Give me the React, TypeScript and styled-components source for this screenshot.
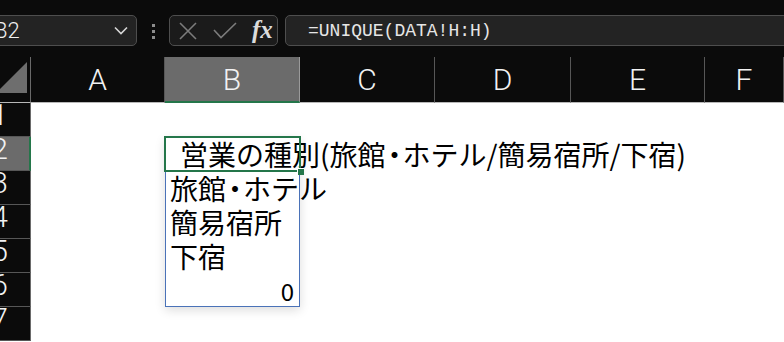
import React from "react";
import styled, { createGlobalStyle } from "styled-components";

const Global = createGlobalStyle`
  html, body { margin: 0; padding: 0; background: #0b0b0b; }
  body { width: 784px; height: 342px; overflow: hidden; }
`;

const Frame = styled.div`
  width: 784px;
  height: 342px;
  overflow: hidden;
  display: flex;
  flex-direction: column;
  background: #0b0b0b;
`;

const Toolbar = styled.div`
  height: 57px;
  box-sizing: border-box;
  padding-top: 15px;
  display: flex;
  align-items: flex-start;
  flex-shrink: 0;
`;

const NameBox = styled.div`
  margin-left: -12px;
  width: 149px;
  height: 31px;
  box-sizing: border-box;
  border: 1px solid #4e4e4e;
  border-radius: 5px;
  background: #232323;
  display: flex;
  align-items: center;
  justify-content: space-between;
  padding: 0 8px 0 5px;
  color: #f0f0f0;
  font: 300 22px Roboto, "Liberation Sans", sans-serif;
`;

const Dots = styled.div`
  margin-left: 14px;
  height: 31px;
  display: flex;
  align-items: center;
`;

const FxBox = styled.div`
  margin-left: 13px;
  width: 109px;
  height: 31px;
  box-sizing: border-box;
  border: 1px solid #4e4e4e;
  border-radius: 5px;
  background: #1b1b1b;
  display: flex;
  align-items: center;
  padding-left: 8px;
  gap: 15px;
`;

const FxLabel = styled.span`
  margin-left: 0;
  color: #dcdcdc;
  font: italic bold 25px "Liberation Serif", serif;
  line-height: 1;
  margin-top: -2px;
`;

const FormulaBar = styled.div`
  margin-left: 7px;
  margin-right: -10px;
  flex: 1;
  height: 31px;
  box-sizing: border-box;
  border: 1px solid #4e4e4e;
  border-radius: 5px;
  background: #232323;
  display: flex;
  align-items: center;
  padding-left: 22px;
  color: #e6e6e6;
  font: 18px "Liberation Mono", monospace;
`;

const Sheet = styled.div`
  display: grid;
  grid-template-columns: 31px 134px 135px 135px 136px 134px 1fr;
  grid-template-rows: 46px repeat(7, 34px);
  background: #ffffff;
  flex: 1;
`;

const Corner = styled.div`
  background: #0b0b0b;
  border-right: 1px solid #6a6a6a;
  border-bottom: 1px solid #b8b8b8;
  box-sizing: border-box;
  display: flex;
  align-items: flex-start;
`;

const ColHeader = styled.div<{ $selected?: boolean }>`
  box-sizing: border-box;
  background: ${(p) => (p.$selected ? "#6b6b6b" : "#0b0b0b")};
  border-right: 1px solid ${(p) => (p.$selected ? "#9a9a9a" : "#575757")};
  border-bottom: ${(p) => (p.$selected ? "2px solid #24764a" : "1px solid #b8b8b8")};
  display: flex;
  align-items: center;
  justify-content: center;
  color: #f2f2f2;
  font: 300 30px Roboto, "Liberation Sans", sans-serif;
  padding-top: ${(p) => (p.$selected ? "1px" : "0")};
`;

const RowHeader = styled.div<{ $selected?: boolean }>`
  grid-column: 1;
  box-sizing: border-box;
  background: ${(p) => (p.$selected ? "#6b6b6b" : "#0b0b0b")};
  border-bottom: 1px solid #575757;
  border-right: ${(p) => (p.$selected ? "2px solid #24764a" : "1px solid #6a6a6a")};
  overflow: hidden;
  display: flex;
  justify-content: flex-end;
  align-items: flex-start;
  padding-right: ${(p) => (p.$selected ? "21px" : "22px")};
  color: #f2f2f2;
  font: 300 30px Roboto, "Liberation Sans", sans-serif;
  line-height: 1;
`;

const RowLabel = styled.span`
  flex-shrink: 0;
  margin-top: -3px;
`;

const SpillRange = styled.div`
  grid-column: 3;
  grid-row: 3 / span 5;
  position: relative;
  display: flex;
  flex-direction: column;
  box-shadow: 0 3px 10px rgba(0, 0, 0, 0.14);
  &::after {
    content: "";
    position: absolute;
    inset: 0;
    border: 1px solid #4a72b8;
    pointer-events: none;
    z-index: 2;
  }
`;

const Cell = styled.div<{ $indent?: number; $numeric?: boolean }>`
  position: relative;
  height: 34px;
  box-sizing: border-box;
  white-space: nowrap;
  overflow: visible;
  padding-left: ${(p) => 5 + (p.$indent || 0)}px;
  padding-right: 6px;
  text-align: ${(p) => (p.$numeric ? "right" : "left")};
  color: #000;
  font-family: "Noto Sans CJK JP", "Noto Sans", sans-serif;
  font-size: ${(p) => (p.$numeric ? "24px" : "28px")};
  line-height: ${(p) => (p.$numeric ? "36px" : "35px")};
`;

const Narrow = styled.span`
  display: inline-block;
  width: 17px;
  overflow: visible;
  text-indent: -5px;
  vertical-align: top;
`;

const Selection = styled.div`
  position: absolute;
  left: -1px;
  top: -1px;
  right: -1px;
  bottom: -1px;
  border: 2px solid #24764a;
  z-index: 3;
  pointer-events: none;
  &::after {
    content: "";
    position: absolute;
    right: -5px;
    bottom: -5px;
    width: 6px;
    height: 6px;
    background: #24764a;
    border: 1px solid #ffffff;
    border-right: none;
    border-bottom: none;
  }
`;

const Chevron = () => (
  <svg width="14" height="9" viewBox="0 0 14 9">
    <polyline points="1,1.5 7,7.5 13,1.5" fill="none" stroke="#d6d6d6" strokeWidth="1.6" />
  </svg>
);

const VDots = () => (
  <svg width="5" height="16" viewBox="0 0 5 16">
    <rect x="1" y="1" width="3" height="3" fill="#8c8c8c" />
    <rect x="1" y="7" width="3" height="3" fill="#8c8c8c" />
    <rect x="1" y="13" width="3" height="3" fill="#8c8c8c" />
  </svg>
);

const CancelIcon = () => (
  <svg width="20" height="18" viewBox="0 0 20 18">
    <path d="M2 1 L18 17 M18 1 L2 17" stroke="#7c7c7c" strokeWidth="1.6" fill="none" />
  </svg>
);

const CheckIcon = () => (
  <svg width="24" height="17" viewBox="0 0 24 17">
    <polyline points="1,8 8,15.5 23,1" fill="none" stroke="#7c7c7c" strokeWidth="1.6" />
  </svg>
);

const CornerTriangle = () => (
  <svg width="30" height="45" viewBox="0 0 30 45">
    <polygon points="0,32 27,5 27,36 0,36" fill="#6e6e6e" />
  </svg>
);

const columns = ["A", "B", "C", "D", "E", "F"];
const rows = [1, 2, 3, 4, 5, 6, 7];

export default function App() {
  return (
    <Frame>
      <Global />
      <Toolbar>
        <NameBox>
          <span>B2</span>
          <Chevron />
        </NameBox>
        <Dots>
          <VDots />
        </Dots>
        <FxBox>
          <CancelIcon />
          <CheckIcon />
          <FxLabel>fx</FxLabel>
        </FxBox>
        <FormulaBar>=UNIQUE(DATA!H:H)</FormulaBar>
      </Toolbar>
      <Sheet>
        <Corner>
          <CornerTriangle />
        </Corner>
        {columns.map((c) => (
          <ColHeader key={c} $selected={c === "B"}>
            {c}
          </ColHeader>
        ))}
        {rows.map((r) => (
          <RowHeader key={r} $selected={r === 2} style={{ gridRow: r + 1 }}>
            <RowLabel>{r}</RowLabel>
          </RowHeader>
        ))}
        <SpillRange>
          <Cell $indent={10}>
            営業の種別(旅館<Narrow>・</Narrow>ホテル/簡易宿所/下宿)
            <Selection />
          </Cell>
          <Cell>
            旅館<Narrow>・</Narrow>ホテル
          </Cell>
          <Cell>簡易宿所</Cell>
          <Cell>下宿</Cell>
          <Cell $numeric>0</Cell>
        </SpillRange>
      </Sheet>
    </Frame>
  );
}
